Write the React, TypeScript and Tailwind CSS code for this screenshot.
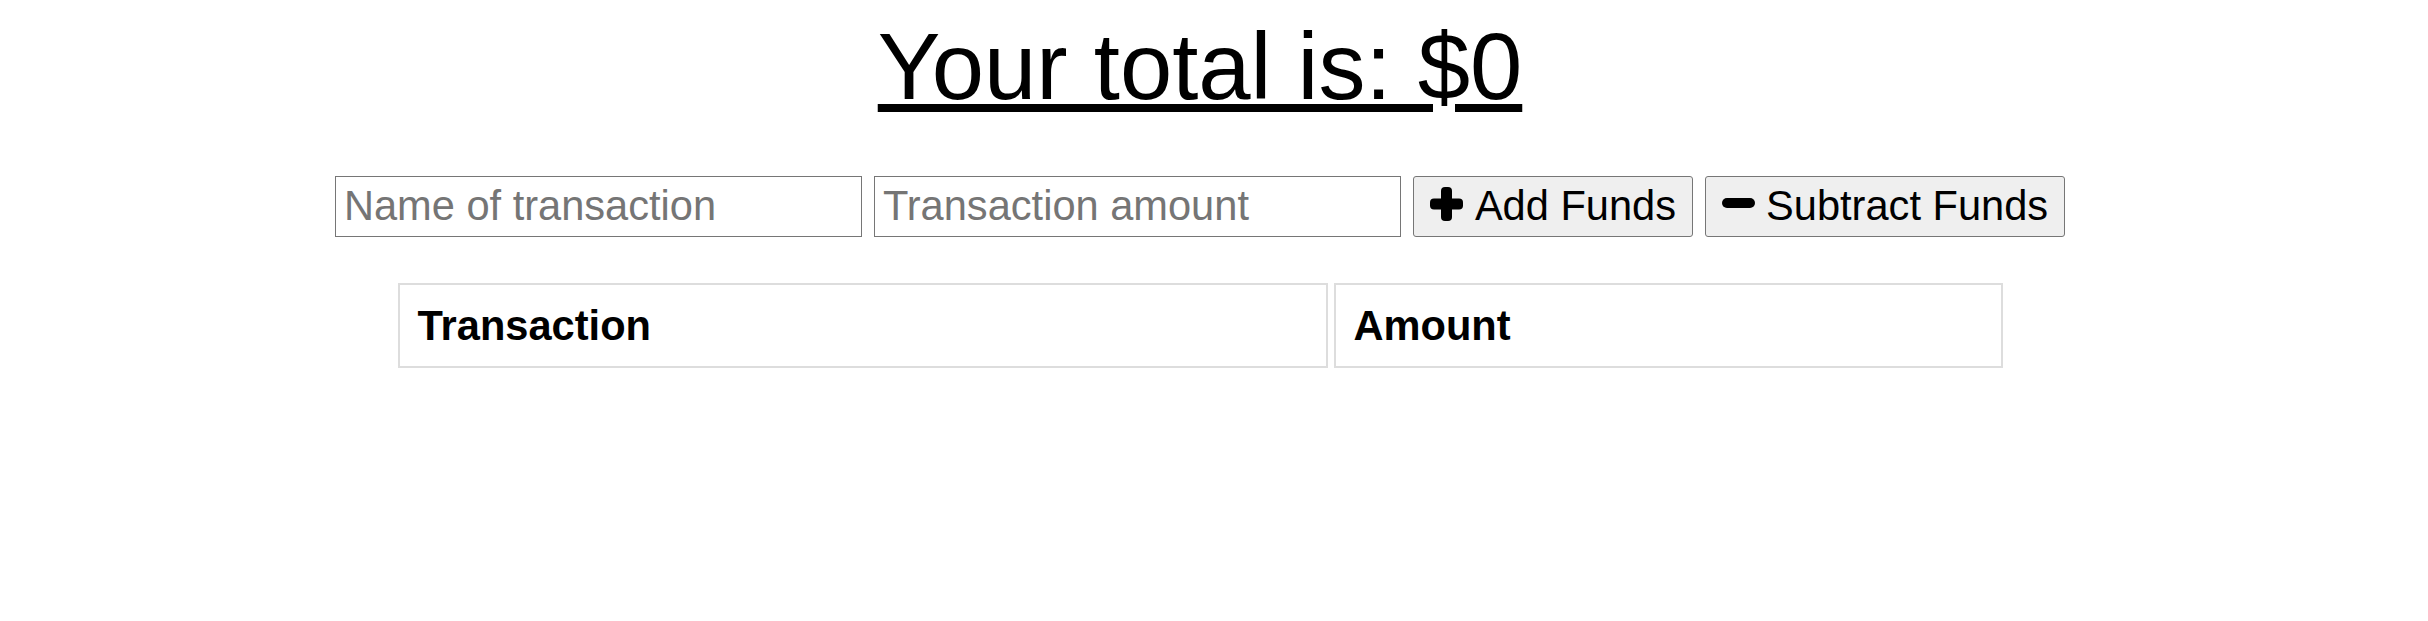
import React from "react";

function PlusIcon() {
  return (
    <svg width="33" height="34" viewBox="0 0 33 34" className="mb-[6px] shrink-0" aria-hidden="true">
      <rect x="11" y="0" width="11" height="34" rx="4" fill="#000" />
      <rect x="0" y="11.5" width="33" height="11" rx="4" fill="#000" />
    </svg>
  );
}

function MinusIcon() {
  return (
    <svg width="33" height="10" viewBox="0 0 33 10" className="mb-[7px] shrink-0" aria-hidden="true">
      <rect x="0" y="0" width="33" height="10" rx="5" fill="#000" />
    </svg>
  );
}

export default function App() {
  return (
    <div className="w-[2400px] flex flex-col items-center bg-white text-black font-['Liberation_Sans',Arial,sans-serif]">
      {/* Total */}
      <h1 className="mt-[13px] h-[107px] text-[94px] leading-[107px] font-normal underline decoration-[8px] underline-offset-[5px]">
        Your total is: $0
      </h1>

      {/* Form */}
      <div className="mt-[56px] flex gap-[12px]">
        <input
          type="text"
          placeholder="Name of transaction"
          className="w-[527px] h-[61px] border border-[#767676] bg-white pl-[8px] text-[41.6px] placeholder:text-[#757575] outline-none"
        />
        <input
          type="number"
          placeholder="Transaction amount"
          className="w-[527px] h-[61px] border border-[#767676] bg-white pl-[8px] text-[41.6px] placeholder:text-[#757575] outline-none"
        />
        <button className="h-[61px] flex items-center px-[16px] border border-[#767676] rounded-[3px] bg-[#efefef] text-[41.6px]">
          <PlusIcon />
          <span className="ml-[12px]">Add Funds</span>
        </button>
        <button className="h-[61px] flex items-center px-[16px] border border-[#767676] rounded-[3px] bg-[#efefef] text-[41.6px]">
          <MinusIcon />
          <span className="ml-[11px]">Subtract Funds</span>
        </button>
      </div>

      {/* Transactions table */}
      <div className="mt-[46px] flex gap-[6px]">
        <div className="w-[930px] h-[85px] flex items-center border-2 border-[#dddddd] pl-[18px] text-[41.6px] font-bold leading-none">
          Transaction
        </div>
        <div className="w-[669px] h-[85px] flex items-center border-2 border-[#dddddd] pl-[18px] text-[41.6px] font-bold leading-none">
          Amount
        </div>
      </div>
    </div>
  );
}
